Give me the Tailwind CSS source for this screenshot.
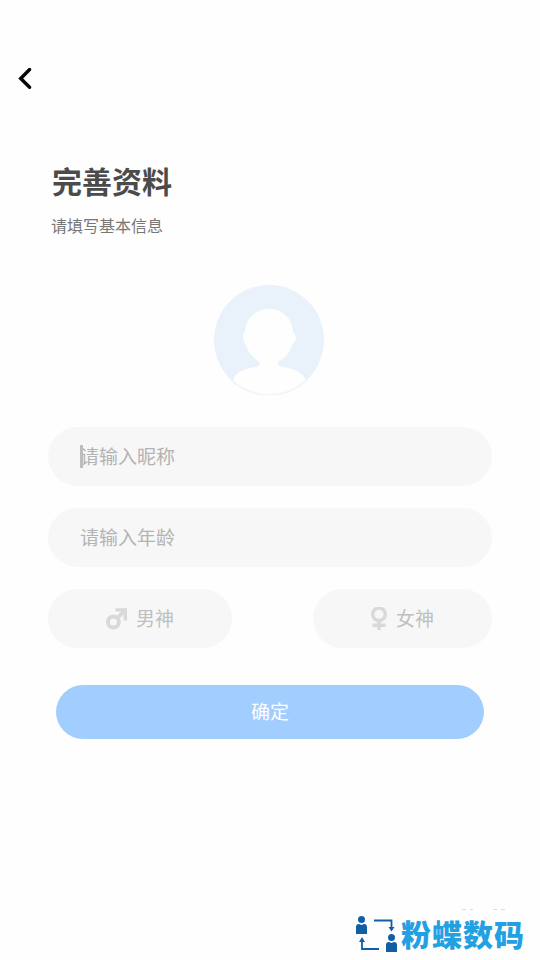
<!DOCTYPE html>
<html lang="zh-CN">
<head>
<meta charset="utf-8">
<title>完善资料</title>
<script src="https://cdn.jsdelivr.net/npm/@tailwindcss/browser@4"></script>
</head>
<body class="bg-[#fefefe]">
<div class="relative flex h-[960px] w-[540px] flex-col overflow-hidden font-['Noto_Sans_CJK_SC',sans-serif]">
  <header class="flex h-[157px] shrink-0 pt-[66px] pl-[17px]">
    <svg class="h-6 w-4" viewBox="0 0 16 24" fill="none" stroke="#050505" stroke-width="3.4" stroke-linecap="round" stroke-linejoin="miter"><path d="M12.6 3.5 3.7 12.5 12.6 21.3"/></svg>
  </header>
  <section class="pl-[51px]">
    <h1 class="h-12 pl-px text-[30px] leading-[46px] font-bold text-[#4b4b4b]">完善资料</h1>
    <p class="h-20 pt-2 text-[16px] leading-[25px] text-[#777]">请填写基本信息</p>
  </section>
  <svg class="ml-[214px] h-[110px] w-[110px] shrink-0" viewBox="0 0 110 110">
    <circle cx="55" cy="55" r="55" fill="#e9f2fa"/>
    <path d="M55 24C42 24 32 33 31 46Q28 51 29 54Q30 58 32 60C34 67 38 71 43 75C47 77 47 81 41 82C31 84 21 86 19 96A54 54 0 0 0 92 96C89 86 79 84 69 82C63 81 62 77 67 75C73 71 76 67 78 60Q81 57 82 54Q82 51 79 46C78 33 68 24 55 24Z" fill="#fefefe"/>
    <path d="M17 94.5A54.5 54.5 0 0 0 93 94.5" fill="none" stroke="#f4f5f6" stroke-width="2"/>
  </svg>
  <main class="mt-8 flex flex-col gap-[22px] px-12 text-[19px] text-[#b3b3b3]">
    <div class="relative flex h-[59px] items-center rounded-full bg-[#f7f7f7] pl-8">
      <span class="absolute left-8 h-[23px] w-[2.5px] bg-[#bdbdbd]"></span>请输入昵称
    </div>
    <div class="flex h-[59px] items-center rounded-full bg-[#f7f7f7] pl-8">请输入年龄</div>
    <div class="flex justify-between text-[#bfbfbf]">
      <div class="flex h-[59px] w-[184px] items-center rounded-full bg-[#f7f7f7] pl-[57px]">
        <svg class="h-6 w-6" viewBox="0 0 24 24" fill="none" stroke="#d9d9d9" stroke-width="3.9"><circle cx="8.4" cy="15" r="5.5"/><path d="m12 11.4 7.5-7.5"/><path d="M10.5 2.9H20.3V13.5" stroke-width="3.4"/></svg>
        <span class="ml-[7px]">男神</span>
      </div>
      <div class="flex h-[59px] w-[179px] items-center rounded-full bg-[#f7f7f7] pl-[57px]">
        <svg class="h-6 w-[18px]" viewBox="0 0 18 24" fill="none" stroke="#d9d9d9" stroke-width="3.5"><circle cx="9" cy="7.3" r="6.3"/><path d="M9 14v9M2.5 18.3h13"/></svg>
        <span class="ml-2">女神</span>
      </div>
    </div>
  </main>
  <button class="mx-14 mt-[37px] h-[54px] shrink-0 rounded-full bg-[#a2cdff] pb-px text-[19px] text-white">确定</button>
  <footer class="mt-auto ml-[354px] flex h-[52px] items-start">
    <svg class="mt-[7px] h-[38px] w-[46px]" viewBox="0 0 46 38" fill="#125ea5">
      <circle cx="7.5" cy="4.5" r="3.5"/><path d="M2 19v-7q0-3 3-3l2.5 1L10 9q3 0 3 3v7z"/>
      <circle cx="37.5" cy="22.5" r="3.5"/><path d="M32 37v-7q0-3 3-3l2.5 1 2.5-1q3 0 3 3v7z"/>
      <path d="M20 5.5h17.5v8M25 34H8v-9" fill="none" stroke="#125ea5" stroke-width="1.8"/>
      <path d="m34.5 12 3 4.5 3-4.5zM5 27l3-5 3 5z"/>
    </svg>
    <div class="ml-[1px] text-[30px] leading-[50px] font-black tracking-[1px] whitespace-nowrap text-[#23a0e2]">粉蝶数码</div>
  </footer>
  <div class="absolute top-[909px] left-[462px] flex h-px w-11 gap-1 opacity-50"><i class="w-[4px] bg-[#bbb]"></i><i class="w-[3px] bg-[#bbb]"></i><i class="ml-4 w-1 bg-[#bbb]"></i><i class="w-1 bg-[#bbb]"></i></div>
</div>
</body>
</html>
